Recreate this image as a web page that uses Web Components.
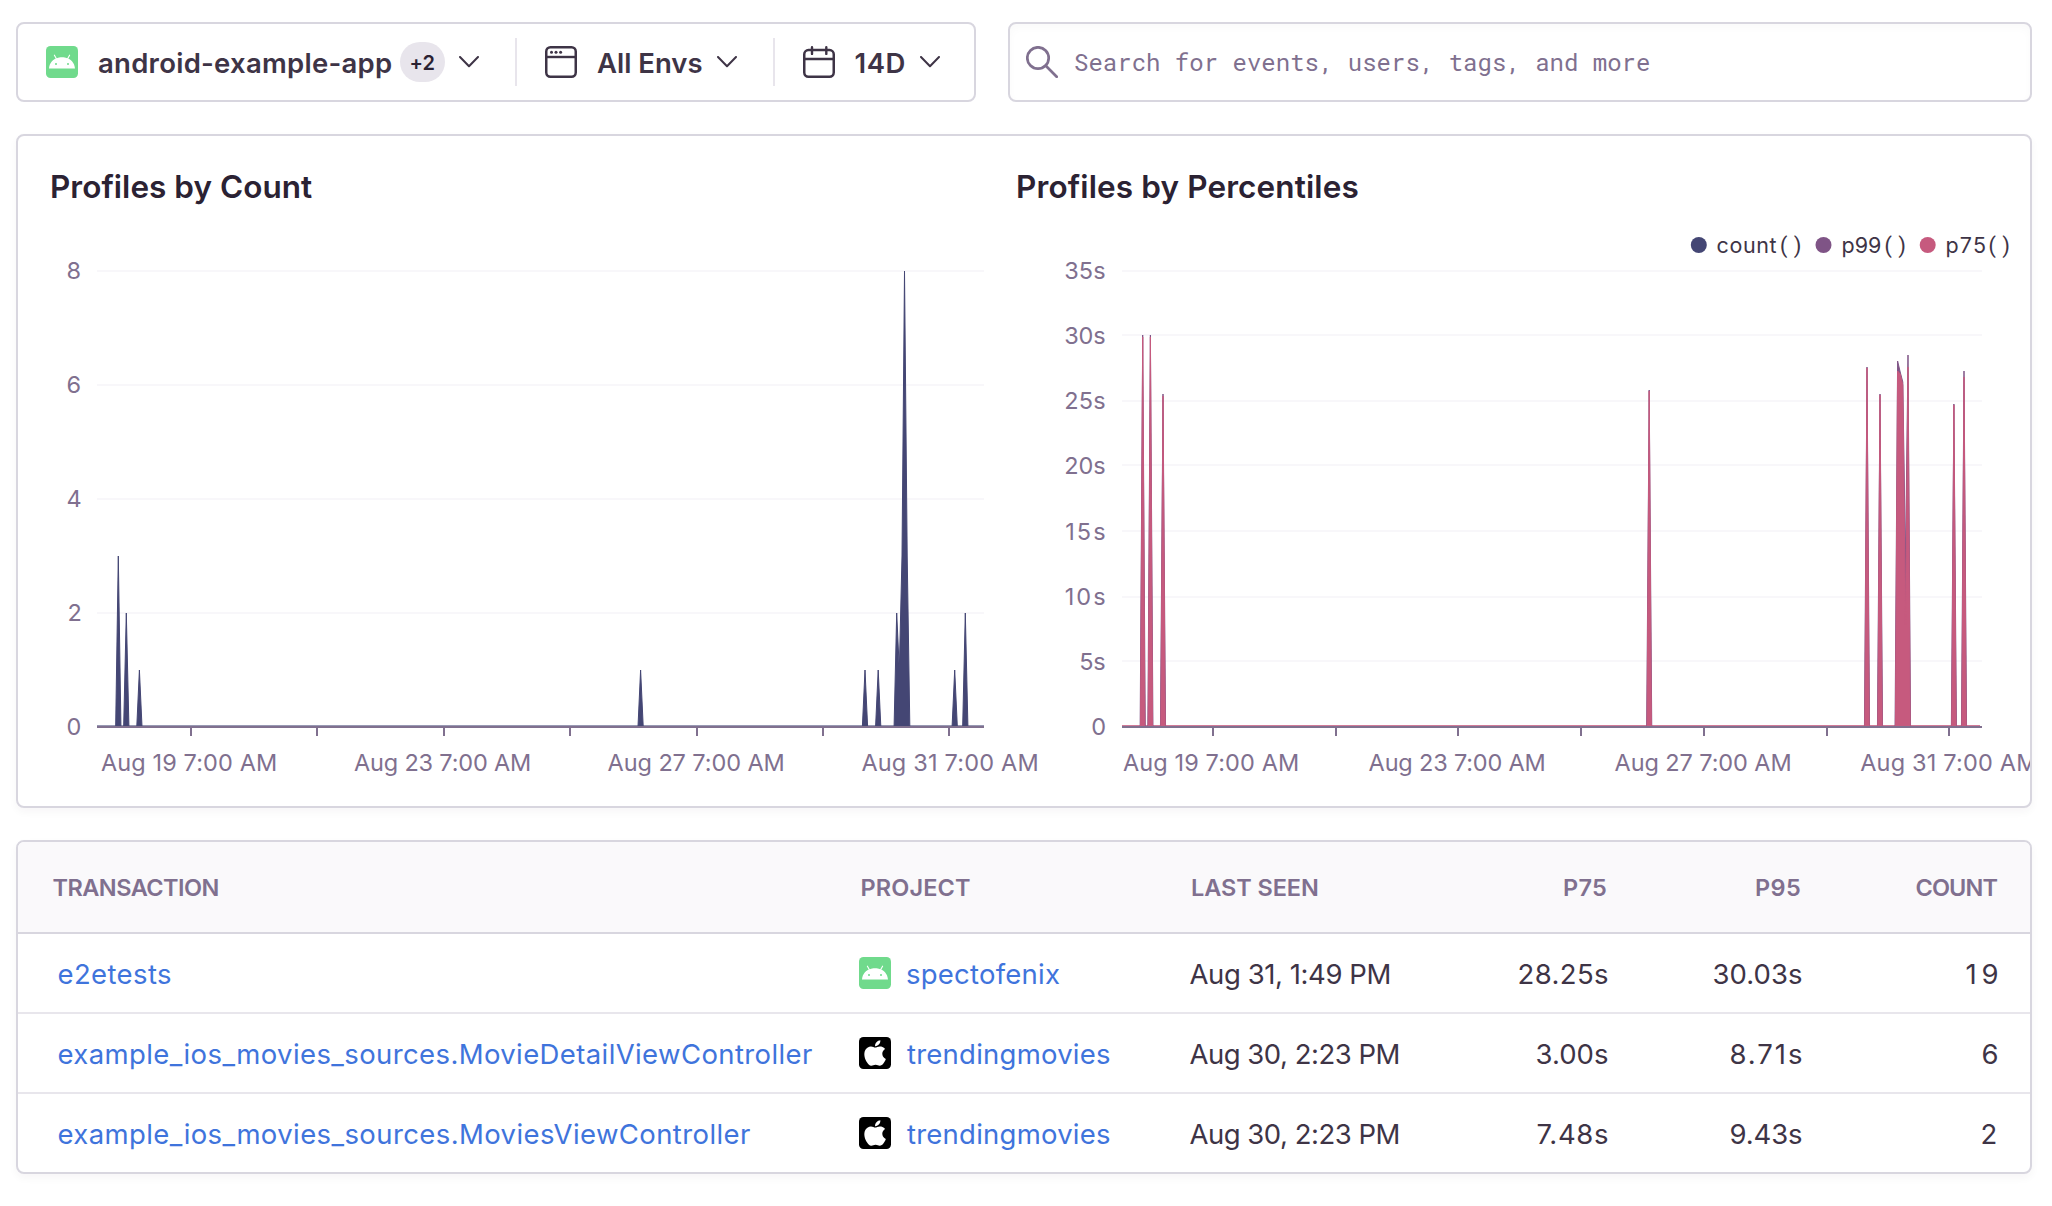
<!DOCTYPE html>
<html lang="en">
<head>
<meta charset="utf-8">
<title>Profiling</title>
<style>
html,body{margin:0;background:#fff}
body{font-family:Inter,"Noto Sans",sans-serif;color:#3e3446}
</style>
</head>
<body>
<profiling-page></profiling-page>
<script>
const SANS='Inter,"Noto Sans",sans-serif';
const MONO='"Roboto Mono","Noto Sans Mono","Liberation Mono",monospace';
const ctx=document.createElement('canvas').getContext('2d');
/* Letter spacing and left bearing that make a string's ink exactly `w` wide. */
function fit(text,size,weight,w,family=SANS){
  ctx.font=`${weight} ${size}px ${family}`;
  const m=ctx.measureText(text);
  const ink=m.actualBoundingBoxRight+m.actualBoundingBoxLeft;
  return {ls:text.length>1?(w-ink)/(text.length-1):0,left:-m.actualBoundingBoxLeft,ink};
}
function define(name,render){
  customElements.define(name,class extends HTMLElement{
    connectedCallback(){
      if(!this.shadowRoot)this.attachShadow({mode:'open'}).innerHTML=render(this);
    }
  });
}
const attr=(e,n,d='')=>e.getAttribute(n)??d;

/* Text whose box is its own ink width: t = text, s = size, k = weight, w = width */
define('fit-text',e=>{
  const t=attr(e,'t'),s=+attr(e,'s',27.5),k=attr(e,'k','400'),w=+attr(e,'w'),fam=e.hasAttribute('mono')?MONO:SANS;
  const f=fit(t,s,k,w,fam);
  return `<style>:host{display:block;flex:none;width:${w}px;white-space:nowrap;font:${k} ${s}px/40px ${fam}}
  span{display:block;margin-left:${-f.left}px;letter-spacing:${f.ls}px}</style><span>${t}</span>`;
});

const ICONS={
  android:`<rect width="32" height="32" rx="4.5" fill="#70da8c"/><path d="M8.4 9.2l2 3.6M23.6 9.2l-2 3.6" stroke="#fff" stroke-width="1.1" stroke-linecap="round"/><path fill="#fff" d="M3 22.6C3.5 16.9 7.1 13 11.5 12.1C12.7 10.8 19.300 10.8 20.5 12.1C24.9 13 28.5 16.9 29 22.6Z"/><circle cx="10" cy="17.9" r="1" fill="#70da8c"/><circle cx="22" cy="17.9" r="1" fill="#70da8c"/>`,
  apple:`<rect width="32" height="32" rx="4.5" fill="#000"/><path transform="translate(2.9 3.300) scale(1.1 1.06)" fill="#fff" d="M12.152 6.896c-.948 0-2.415-1.078-3.960-1.040-2.040.027-3.910 1.183-4.961 3.014-2.117 3.675-.546 9.103 1.519 12.090 1.013 1.454 2.208 3.090 3.792 3.039 1.520-.065 2.090-.987 3.935-.987 1.831 0 2.350.987 3.960.948 1.637-.026 2.676-1.480 3.676-2.948 1.156-1.688 1.636-3.325 1.662-3.415-.039-.013-3.182-1.221-3.220-4.857-.026-3.040 2.480-4.494 2.597-4.559-1.429-2.090-3.623-2.324-4.390-2.376-2-.156-3.675 1.090-4.610 1.090zM15.530 3.830c.843-1.012 1.400-2.427 1.245-3.830-1.207.052-2.662.805-3.532 1.818-.780.896-1.454 2.338-1.273 3.714 1.338.104 2.715-.688 3.559-1.701"/>`,
  window:`<rect x="1.250" y="1.250" width="29.500" height="29.500" rx="4.200" fill="none" stroke="#3e3446" stroke-width="2.500"/><path d="M1 11H31" stroke="#3e3446" stroke-width="2.400"/><circle cx="6.500" cy="6.300" r="1.500" fill="#3e3446"/><circle cx="11" cy="6.300" r="1.500" fill="#3e3446"/><circle cx="15.600" cy="6.300" r="1.500" fill="#3e3446"/>`,
  calendar:`<rect x="1.250" y="4.100" width="29.500" height="26.650" rx="4.200" fill="none" stroke="#3e3446" stroke-width="2.500"/><path d="M1 13H31M9 1.200V7.900M23.300 1.200V7.900" stroke="#3e3446" stroke-width="2.400" stroke-linecap="round"/>`,
  search:`<circle cx="12" cy="12" r="10.700" fill="none" stroke="#80708f" stroke-width="2.700"/><path d="M19.800 19.800L30.700 30.700" stroke="#80708f" stroke-width="2.700" stroke-linecap="round"/>`
};
define('ui-icon',e=>`<style>:host{display:block;flex:none;width:32px;height:32px}svg{display:block}</style><svg width="32" height="32" viewBox="0 0 32 32">${ICONS[attr(e,'name')]}</svg>`);
define('ui-chevron',()=>`<style>:host{display:block;flex:none;width:20px;height:12px}svg{display:block}</style><svg width="20" height="12" viewBox="0 0 20 12"><path d="M1 1L10 10.300L19 1" fill="none" stroke="#3e3446" stroke-width="2" stroke-linecap="round" stroke-linejoin="round"/></svg>`);

define('filter-bar',()=>`<style>
:host{display:flex;align-items:center;box-sizing:border-box;width:960px;height:80px;border:2px solid #d8d6df;border-radius:8px;padding-left:28px}
fit-text{padding-top:1px}
.badge{display:flex;align-items:center;justify-content:center;width:45px;height:40px;border-radius:20px;background:#e8e5ec;color:#2b2233;margin:0 14px 0 9px}
i{width:2px;height:48px;background:#e8e5ec}
</style>
<ui-icon name="android" style="margin-right:21px"></ui-icon>
<fit-text t="android-example-app" k="600" w="292"></fit-text>
<div class="badge"><fit-text t="+2" s="20" k="600" w="24"></fit-text></div><ui-chevron></ui-chevron>
<i style="margin:0 28px 0 36px"></i>
<ui-icon name="window" style="margin-right:20px"></ui-icon><fit-text t="All Envs" k="600" w="104.500" style="margin-right:15px"></fit-text><ui-chevron></ui-chevron>
<i style="margin:0 28px 0 36px"></i>
<ui-icon name="calendar" style="margin-right:21px"></ui-icon><fit-text t="14D" k="600" w="49" style="margin-right:15px"></fit-text><ui-chevron></ui-chevron>`);

define('search-bar',()=>`<style>
:host{display:flex;align-items:center;flex:1;box-sizing:border-box;height:80px;border:2px solid #d8d6df;border-radius:8px;padding-left:16px;gap:17px;color:#80708f;box-shadow:inset 0 4px 8px rgba(43,34,51,.025)}
</style><ui-icon name="search"></ui-icon><fit-text mono t="Search for events, users, tags, and more" s="24" w="574"></fit-text>`);

/* SVG label placed by its ink box */
function label(t,x,cy,w,{anchor='start',size=23.5,fill='#80708f'}={}){
  const f=fit(t,size,400,w);
  const ink=t.length>1?w:f.ink;
  const x0=anchor==='end'?x-ink:anchor==='middle'?x-ink/2:x;
  return `<text x="${x0-f.left}" y="${cy+.5+size*.3635}" font-size="${size}" letter-spacing="${f.ls}" fill="${fill}">${t}</text>`;
}
const DATES=['Aug 19 7:00 AM','Aug 23 7:00 AM','Aug 27 7:00 AM','Aug 31 7:00 AM'];
function axes({x0,x1,grid,labels,lx,ticks,shift}){
  let s='';
  grid.forEach(y=>s+=`<rect x="${x0}" y="${y}" width="${x1-x0}" height="2" fill="#f8f7fa"/>`);
  labels.forEach(([t,cy,w])=>s+=label(t,lx,cy,w,{anchor:'end'}));
  ticks.forEach((x,i)=>{
    s+=`<rect x="${Math.round(x)-1}" y="728" width="2" height="8" fill="#80708f"/>`;
    if(i%2===0)s+=label(DATES[i/2],x+shift[i/2],761.700,i===0?175:176,{anchor:'middle'});
  });
  return s;
}
const range=(a,d,n)=>Array.from({length:n},(_,i)=>a+d*i);
const area=(runs,step,fill)=>runs.map(r=>{
  const a=r[0][0]-step,b=r[r.length-1][0]+step;
  return `<path d="M${a} 727L${r.map(p=>p.join(' ')).join('L')}L${b} 727Z" fill="${fill}" stroke="${fill}" stroke-width="1" stroke-linejoin="bevel"/>`;
}).join('');

const v=n=>727-n*57;
const countChart=()=>axes({x0:97,x1:984,grid:[270,384,498,612],lx:80.500,shift:[-2.500,-1.800,-1,0],
  labels:[['8',270,13],['6',384,13],['4',498,13],['2',611.500,13],['0',725.500,13]],ticks:range(191,126.400,7)})
 +`<rect x="97" y="725" width="887" height="1" fill="#444674" opacity=".55"/>`
 +area([[[118.300,v(3)]],[[126.300,v(2)]],[[139.400,v(1)]],[[640.600,v(1)]],[[865,v(1)]],[[878.200,v(1)]],
   [[896.700,v(2)],[899.300,v(1)],[902,v(3)],[904.500,v(8)],[907.200,v(3)]],[[954.700,v(1)]],[[965.300,v(2)]]],2.630,'#444674')
 +`<rect x="97" y="726" width="887" height="2" fill="#80708f"/>`;

function legend(t,cx,tx,w,fill){
  const f=fit(t,21.5,400,w);
  return `<circle cx="${cx}" cy="245" r="8" fill="${fill}"/><text x="${tx-f.left}" y="253" font-size="21.5" fill="#3e3446"><tspan letter-spacing="${f.ls}">${t}</tspan><tspan x="${tx+w+1}" font-family='${MONO}' font-size="22">()</tspan></text>`;
}
const percentileChart=()=>axes({x0:1122,x1:1982,grid:[270,334,400,464,530,596,660],lx:1105.200,shift:[-2.500,-1.800,-1.300,-1],
  labels:[['35s',270,40],['30s',335,40],['25s',400,40],['20s',465,40],['15s',531,39],['10s',596,39.500],['5s',661,25],['0',725.500,13]],ticks:range(1213,122.700,7)})
 +`<rect x="1122" y="725" width="858" height="1" fill="#c65a7e" opacity=".8"/>`
 +area([[[1142.700,335]],[[1150.400,335]],[[1163,394]],[[1649.200,390]],[[1867,367]],[[1880,394]],
   [[1897.600,361],[1900.200,372],[1902.800,382],[1905.500,560],[1908,355]],[[1953.900,404]],[[1964,371]]],2.550,'#7f5486')
 +area([[[1142.700,337]],[[1150.400,337]],[[1163,396]],[[1649.200,391]],[[1867,368]],[[1880,395]],
   [[1897.600,371],[1900.200,374],[1902.800,385],[1905.500,625],[1908,367]],[[1953.900,405]],[[1964,377]]],2.200,'#c65a7e')
 +`<rect x="1122" y="726" width="860" height="2" fill="#80708f"/>`
 +legend('count',1698.800,1717.500,59,'#444674')+legend('p99',1823.500,1842.500,38.500,'#7f5486')+legend('p75',1927.700,1946.500,38.500,'#c65a7e');

define('profile-chart',e=>{
  const one=attr(e,'kind')==='count';
  return `<style>:host{display:flex;flex-direction:column;flex:none;width:${one?966:1046}px;padding-top:31px}
  fit-text{color:#2b2233;margin-left:34px}svg{display:block;overflow:visible;font-family:${SANS};flex:none}</style>
  <fit-text t="${one?'Profiles by Count':'Profiles by Percentiles'}" s="31.5" k="600" w="${one?260:339.500}"></fit-text>
  <svg width="${one?966:1046}" height="599" viewBox="${one?'18 207 966 599':'984 207 1046 599'}">${one?countChart():percentileChart()}</svg>`;
});
define('chart-card',()=>`<style>:host{display:flex;box-sizing:border-box;height:674px;border:2px solid #d8d6df;border-radius:8px;overflow:hidden;background:#fff;box-shadow:0 4px 8px rgba(43,34,51,.04)}</style>
<profile-chart kind="count"></profile-chart><profile-chart kind="percentiles"></profile-chart>`);

/* One table line; header lines carry the `head` attribute. */
define('table-line',e=>{
  const h=e.hasAttribute('head'),c=JSON.parse(attr(e,'cells'));
  const T=(i,cls='')=>`<fit-text class="${cls}" t="${c[i][0]}" w="${c[i][1]}" s="${h?23.5:27.5}" k="${h?600:400}"></fit-text>`;
  return `<style>:host{display:grid;grid-template-columns:841px 331px 233px 185px 194px auto;align-items:center;box-sizing:border-box;height:${h?92:80}px;
  border-bottom:2px solid ${h?'#d8d6df':'#e8e6ec'};${h?'background:#faf9fb;color:#80708f':'color:#3e3446'}}
  :host([last]){border-bottom:0;height:78px}
  fit-text{padding-top:1px}
  .a{margin-left:${h?34.500:40.500}px}.p{display:flex;align-items:center;gap:16px;margin-left:${h?2.500:0}px}.d{margin-left:${h?2:-.5}px}
  .l{color:#3f74dc}.r{justify-self:end}.q{margin-right:${h?2:0}px}.z{justify-self:end;margin-right:32.500px}</style>
  ${T(0,'a '+(h?'':'l'))}<div class="p">${h?'':`<ui-icon name="${attr(e,'icon')}"></ui-icon>`}${T(1,h?'':'l')}</div>${T(2,'d')}${T(3,'r q')}${T(4,'r q')}${T(5,'z')}`;
});
define('profile-table',()=>`<style>:host{display:block;box-sizing:border-box;height:334px;border:2px solid #d8d6df;border-radius:8px;overflow:hidden;background:#fff;box-shadow:0 4px 8px rgba(43,34,51,.04)}</style>
<table-line head cells='[["TRANSACTION",166],["PROJECT",108.500],["LAST SEEN",126],["P75",42],["P95",44],["COUNT",81]]'></table-line>
<table-line icon="android" cells='[["e2etests",112.500],["spectofenix",153],["Aug 31, 1:49 PM",200],["28.25s",88.500],["30.03s",88.500],["19",31]]'></table-line>
<table-line icon="apple" cells='[["example_ios_movies_sources.MovieDetailViewController",753.500],["trendingmovies",203],["Aug 30, 2:23 PM",209],["3.00s",71.500],["8.71s",71.500],["6",15]]'></table-line>
<table-line last icon="apple" cells='[["example_ios_movies_sources.MoviesViewController",691.500],["trendingmovies",203],["Aug 30, 2:23 PM",209],["7.48s",70.500],["9.43s",71.500],["2",15]]'></table-line>`);

define('profiling-page',()=>`<style>:host{display:flex;flex-direction:column;gap:32px;box-sizing:border-box;width:2052px;height:1206px;padding:22px 20px 0 16px;overflow:hidden}
.top{display:flex;gap:32px}</style>
<div class="top"><filter-bar></filter-bar><search-bar></search-bar></div><chart-card></chart-card><profile-table></profile-table>`);
</script>
</body>
</html>
